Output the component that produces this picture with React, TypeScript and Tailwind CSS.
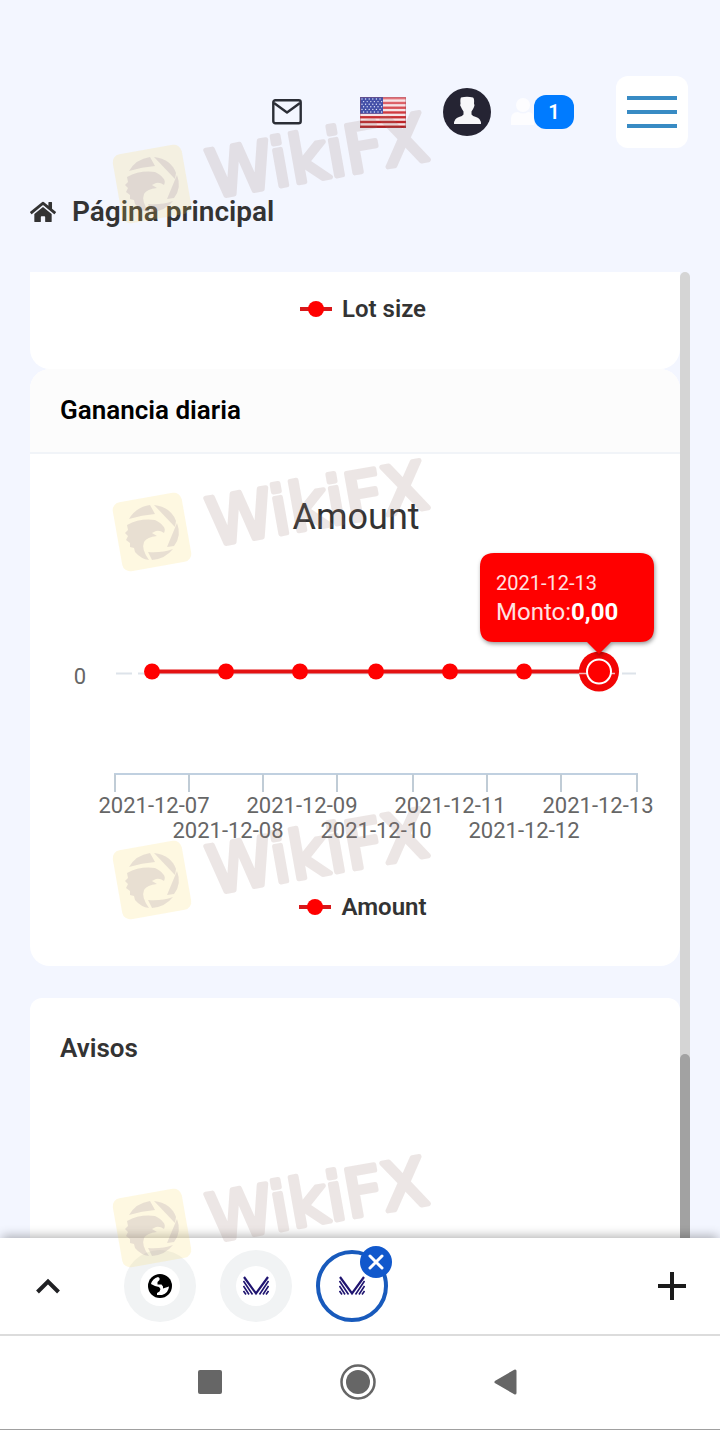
import { FaHome } from "react-icons/fa"

const points = [
	{ date: "2021-12-07", x: 122 },
	{ date: "2021-12-08", x: 196 },
	{ date: "2021-12-09", x: 270 },
	{ date: "2021-12-10", x: 346 },
	{ date: "2021-12-11", x: 420 },
	{ date: "2021-12-12", x: 494 },
	{ date: "2021-12-13", x: 569 },
]

const ticks = [85, 159, 233, 307, 383, 457, 531, 607]

function MailIcon() {
	return (
		<svg width="30" height="26" viewBox="0 0 30 26" fill="none" stroke="#2b2e36" strokeWidth="2.4" strokeLinejoin="round">
			<rect x="1.3" y="1.3" width="27.4" height="23" rx="2" />
			<path d="M2 4 15 13.5 28 4" />
		</svg>
	)
}

function FlagIcon() {
	const stripes = [0, 1, 2, 3, 4, 5, 6, 7, 8, 9, 10, 11, 12]
	const stars = [0, 1, 2, 3, 4, 5]
	return (
		<svg width="46" height="31" viewBox="0 0 46 31">
			<defs>
				<linearGradient id="flagShade" x1="0" y1="0" x2="0" y2="1">
					<stop offset="0" stopColor="#e57a82" />
					<stop offset="0.5" stopColor="#d03a40" />
					<stop offset="1" stopColor="#b01818" />
				</linearGradient>
			</defs>
			<rect width="46" height="31" fill="url(#flagShade)" />
			{stripes.map((i) =>
				i % 2 === 1 ? <rect key={i} y={i * 2.38} width="46" height="2.38" fill="#f6e4e6" /> : null
			)}
			<rect width="23" height="16.7" fill="#4450a8" />
			{stars.map((row) =>
				stars.map((col) => (
					<circle key={`${row}-${col}`} cx={2 + col * 3.6 + (row % 2) * 1.6} cy={2 + row * 2.6} r="0.7" fill="#dfe3fa" />
				))
			)}
			<rect x="0.5" y="0.5" width="45" height="30" fill="none" stroke="#9a4a5c" strokeOpacity="0.35" />
		</svg>
	)
}

function AvatarIcon() {
	return (
		<svg width="48" height="48" viewBox="0 0 48 48">
			<circle cx="24" cy="24" r="24" fill="#252433" />
			<path
				d="M18 9.500Q24 8 30 9.500Q31.500 10.500 31 15.500Q32 17 31 19Q30 21.500 28.500 23.500V26.500Q29.500 28 33 29Q38 30.500 38 36H11Q11 30.500 16 29Q19.500 28 20.500 26.500V23.500Q19 21.500 18 19Q16.500 17 17.500 15.500Q17 11 18 9.500Z"
				fill="#f7f7f9"
			/>
		</svg>
	)
}

function UserIcon() {
	return (
		<svg width="23" height="30" viewBox="0 0 23 30" fill="#fdfdff">
			<circle cx="12" cy="8" r="7" />
			<path d="M0 28v-6q0-7 7-7 5 3 10 0 6 0 6 7v6z" />
		</svg>
	)
}

function Header() {
	return (
		<header className="flex items-center justify-end px-8 pt-[76px]">
			<button type="button" aria-label="Mensajes">
				<MailIcon />
			</button>
			<button type="button" aria-label="Idioma" className="ml-[58px]">
				<FlagIcon />
			</button>
			<button type="button" aria-label="Perfil" className="ml-[37px]">
				<AvatarIcon />
			</button>
			<button type="button" className="ml-5 flex items-center">
				<UserIcon />
				<span className="flex h-[34px] w-10 items-center justify-center rounded-xl bg-[#007bff] text-xl font-semibold text-white">
					1
				</span>
			</button>
			{/* Menu toggle */}
			<button type="button" aria-label="Menú" className="ml-[42px] flex size-[72px] flex-col items-center justify-center gap-2.5 rounded-xl bg-white">
				<span className="h-1 w-[50px] bg-[#388bc4]" />
				<span className="h-1 w-[50px] bg-[#388bc4]" />
				<span className="h-1 w-[50px] bg-[#388bc4]" />
			</button>
		</header>
	)
}

function Legend({ label }: { label: string }) {
	return (
		<div className="flex items-center justify-center gap-2.5 pl-4 text-2xl/[30px] font-semibold text-[#333333]">
			<svg width="32" height="18" viewBox="0 0 32 18">
				<path d="M0 9h32" stroke="#d8181a" strokeWidth="4" />
				<circle cx="16" cy="9" r="8" fill="#ff0000" />
			</svg>
			{label}
		</div>
	)
}

function AmountChart() {
	return (
		<svg viewBox="0 0 650 438" className="block w-full" role="img" aria-label="Amount">
			<text x="326" y="75" fontSize="36" textAnchor="middle" fill="#333333">
				Amount
			</text>
			{/* Zero line */}
			<path d="M86 219.500H102M108 219.500H586M592 219.500H606" stroke="#dde3ea" strokeWidth="2" />
			<text x="50" y="230" fontSize="22" textAnchor="middle" fill="#666666">
				0
			</text>
			{/* X axis */}
			<path d="M84 320H608" stroke="#c0d0e0" strokeWidth="2" />
			{ticks.map((x) => (
				<path key={x} d={`M${x} 320v18`} stroke="#c0ccd6" strokeWidth="2" />
			))}
			{points.map((point, i) => (
				<text key={point.date} x={124 + i * 74} y={i % 2 === 0 ? 359 : 384} fontSize="22" textAnchor="middle" fill="#666666">
					{point.date}
				</text>
			))}
			{/* Series */}
			<path d="M122 217.500H569" stroke="#e31212" strokeWidth="4" />
			{points.map((point) => (
				<circle key={point.date} cx={point.x} cy="217.500" r="8" fill="#ff0000" />
			))}
			<circle cx="569" cy="217.500" r="20" fill="#f20505" />
			<path d="M549 219.500h8M581 219.500h4" stroke="#f6b3b3" strokeWidth="1.500" />
			<circle cx="569" cy="217.500" r="12" fill="#ff0000" stroke="#ffffff" strokeWidth="2" />
			{/* Tooltip */}
			<path
				d="M464 99H610Q624 99 624 113V174Q624 188 610 188H581L569 200 557 188H464Q450 188 450 174V113Q450 99 464 99Z"
				fill="#ff0000"
				className="drop-shadow-[1px_2px_2px_rgba(0,0,0,0.4)]"
			/>
			<text x="466" y="136" fontSize="20" fill="#ffe2e2">
				2021-12-13
			</text>
			<text x="466" y="166" fontSize="24" fill="#ffe2e2">
				Monto:
				<tspan fontWeight="bold" fill="#ffffff">
					0,00
				</tspan>
			</text>
		</svg>
	)
}

function Watermark() {
	return (
		<svg width="360" height="140" viewBox="0 -10 360 140" className="overflow-visible" aria-hidden="true">
			<rect x="-35" y="-35" width="70" height="70" rx="8" fill="#fad75a" fillOpacity="0.18" transform="translate(44 80) rotate(-10)" />
			<g transform="translate(44 80)" fill="#857090" fillOpacity="0.18">
				{/* Shutter blades */}
				<path d="M-23-13Q-16-25-2-27L3-18Q-10-17-23-13Z" />
				<path d="M2-27Q19-25 24-11L23-5Z" />
				<path d="M25-9Q30 4 22 14L15 15Z" />
				<path d="M21 17Q13 27 0 28L-4 20Q10 21 21 17Z" />
				{/* Eagle head */}
				<path d="M-25-7Q-12-14 3-12 9-9 11-6 14-3 12 1 8-2 4-1L0 1 5 4Q-5 5-8 10-11 17-3 28-11 27-17 20L-18 16-22 15-22 11-26 8-24 4-27 1-24-2Z" />
			</g>
			<text
				transform="translate(104 94) rotate(-10)"
				fontSize="66"
				fill="#9b7a74"
				stroke="#9b7a74"
				strokeWidth="5"
				strokeLinejoin="round"
				opacity="0.18"
				className="font-['DejaVu_Sans',sans-serif]"
			>
				WikiFX
			</text>
		</svg>
	)
}

function BrandIcon() {
	return (
		<svg width="26" height="20" viewBox="0 0 26 20" fill="none" stroke="#1f1470" strokeWidth="1.600">
			<path d="M1 1 13 17.500 25 1" strokeWidth="2.200" />
			<path d="M.5 5 9.500 18.500M.5 10 6 18.500M.5 15 3 18.500M25.500 5 16.500 18.500M25.500 10 20 18.500M25.500 15 23 18.500" />
		</svg>
	)
}

function GlobeIcon() {
	return (
		<svg width="24" height="24" viewBox="0 0 24 24">
			<circle cx="12" cy="12" r="12" fill="#000000" />
			<path d="M3 10Q4.500 4.500 10 3L11.500 4V6L9.500 8V10.500H13.500L15 12.500V14.500L18 13.500 21 12.500Q20.500 19 14 21L9 21V19L11.500 17.500 12.500 15 11 13 7 12Z" fill="#ffffff" />
		</svg>
	)
}

function TabBar() {
	return (
		<nav className="relative flex items-center border-b-2 border-[#dcdcdc] bg-white py-3 shadow-[0_-4px_10px_-2px_rgba(0,0,0,0.3)]">
			<button type="button" aria-label="Mostrar pestañas" className="flex w-24 justify-center">
				<svg width="24" height="16" viewBox="0 0 24 16" fill="none" stroke="#202124" strokeWidth="4">
					<path d="M1.500 14 12 3.500 22.500 14" />
				</svg>
			</button>
			<div className="ml-7 flex flex-1 gap-6">
				<button type="button" aria-label="Pestaña 1" className="flex size-[72px] items-center justify-center rounded-full bg-[#f1f3f4]">
					<span className="flex size-10 items-center justify-center rounded-full bg-white">
						<GlobeIcon />
					</span>
				</button>
				<button type="button" aria-label="Pestaña 2" className="flex size-[72px] items-center justify-center rounded-full bg-[#f1f3f4]">
					<span className="flex size-10 items-center justify-center rounded-full bg-white">
						<BrandIcon />
					</span>
				</button>
				<button type="button" aria-label="Cerrar pestaña 3" className="relative flex size-[72px] items-center justify-center rounded-full border-4 border-[#185abc]">
					<BrandIcon />
					<span className="absolute -top-2 -right-2 flex size-8 items-center justify-center rounded-full bg-[#1158cc]">
						<svg width="16" height="16" viewBox="0 0 16 16" stroke="#ffffff" strokeWidth="3" strokeLinecap="round">
							<path d="M2 2 14 14M14 2 2 14" />
						</svg>
					</span>
				</button>
			</div>
			<button type="button" aria-label="Nueva pestaña" className="flex w-24 justify-center">
				<svg width="28" height="28" viewBox="0 0 28 28" stroke="#1b1b1b" strokeWidth="4">
					<path d="M0 14H28M14 0V28" />
				</svg>
			</button>
		</nav>
	)
}

function SystemBar() {
	return (
		<div className="relative flex h-[94px] items-center justify-center gap-[118px] border-b border-[#a0a0a0] bg-white pr-1.5 pb-0.5">
			<button type="button" aria-label="Recientes" className="size-6 rounded-xs bg-[#666666]" />
			<button type="button" aria-label="Inicio">
				<svg width="36" height="36" viewBox="0 0 36 36">
					<circle cx="18" cy="18" r="16.500" fill="none" stroke="#666666" strokeWidth="2.500" />
					<circle cx="18" cy="18" r="12" fill="#666666" />
				</svg>
			</button>
			<button type="button" aria-label="Atrás">
				<svg width="23" height="28" viewBox="0 0 23 28">
					<path d="M2 14 21 3V25Z" fill="#666666" stroke="#666666" strokeWidth="3" strokeLinejoin="round" />
				</svg>
			</button>
		</div>
	)
}

export default function App() {
	return (
		<div className="relative flex min-h-screen flex-col overflow-hidden bg-[#f3f6ff] font-[Roboto,sans-serif]">
			<Header />
			<div className="flex items-center gap-4 px-[30px] pt-12 pb-11 text-[#333333]">
				<FaHome className="size-[26px]" />
				<h1 className="text-[28px]/8 font-semibold">Página principal</h1>
			</div>
			<div className="flex flex-1 px-[30px]">
				<main className="flex flex-1 flex-col">
					<section className="rounded-b-[20px] bg-white pt-[22px] pb-[45px]">
						<Legend label="Lot size" />
					</section>
					{/* Daily profit */}
					<section className="mb-8 overflow-hidden rounded-[20px] bg-white">
						<h2 className="border-b-2 border-[#f1f4f8] bg-[#fcfcfc] px-[30px] pt-[25px] pb-[26px] text-[26px]/8 font-semibold text-black">
							Ganancia diaria
						</h2>
						<AmountChart />
						<div className="pb-11">
							<Legend label="Amount" />
						</div>
					</section>
					{/* Notices */}
					<section className="flex-1 rounded-t-xl bg-white px-[30px] py-[34px]">
						<h2 className="text-[26px]/8 font-semibold text-[#333333]">Avisos</h2>
					</section>
				</main>
				{/* Scrollbar */}
				<div className="flex w-2.5 flex-col rounded-t-full bg-[#d5d5d5]">
					<div className="flex-81" />
					<div className="flex-19 rounded-t-full bg-[#a2a2a2]" />
				</div>
			</div>
			<TabBar />
			<SystemBar />
			{/* Watermarks */}
			<div className="pointer-events-none absolute top-[94px] left-[108px] flex flex-col gap-[208px]">
				<Watermark />
				<Watermark />
				<Watermark />
				<Watermark />
			</div>
		</div>
	)
}
